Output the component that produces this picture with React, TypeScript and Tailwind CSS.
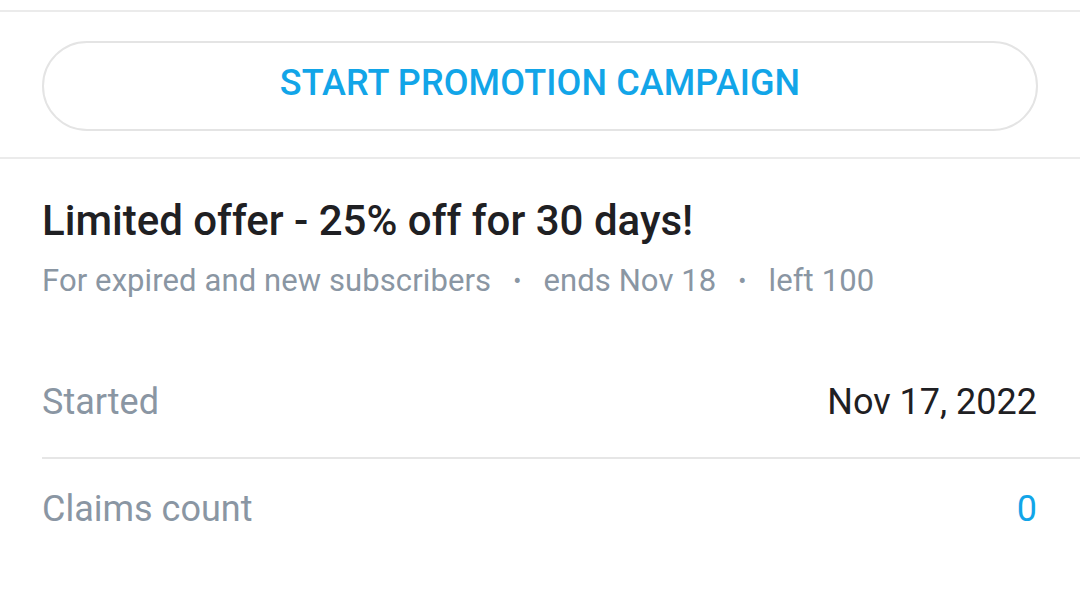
export default function App() {
  const font = { fontFamily: "Roboto, 'Noto Sans', sans-serif" };
  return (
    <div className="w-[1080px] h-[603px] bg-white overflow-hidden" style={font}>
      <div className="h-[10px] bg-white" />
      <div className="border-t-2 border-[#ebebeb] px-[42px] pt-[29px] pb-[26px]">
        <button
          type="button"
          className="w-[996px] h-[90px] rounded-full border-2 border-[#e4e4e4] bg-white flex items-center justify-center pb-[6px] text-[36px] font-medium text-[#12a5e8] tracking-[0.1px]"
        >
          START PROMOTION CAMPAIGN
        </button>
      </div>
      <div className="border-t-2 border-[#ebebeb] pt-[40px]">
        <div className="px-[42px]">
          <h2 className="text-[42px] font-medium text-[#1f2023] leading-[44px]">
            Limited offer - 25% off for 30 days!
          </h2>
          <div className="mt-[19px] flex items-center text-[31px] text-[#8a96a3] leading-[38px] tracking-[0.1px]">
            <span>For expired and new subscribers</span>
            <span className="mx-[22px] text-[24px]">•</span>
            <span>ends Nov 18</span>
            <span className="mx-[22px] text-[24px]">•</span>
            <span>left 100</span>
          </div>
        </div>
        <div className="mt-[51px] pl-[42px]">
          <div className="flex items-center justify-between pr-[43px] h-[108px] border-b-2 border-[#e6e6e6] pb-[4px]">
            <span className="text-[36px] text-[#8a96a3]">Started</span>
            <span className="text-[36px] text-[#1f2023]">Nov 17, 2022</span>
          </div>
          <div className="flex items-center justify-between pr-[43px] h-[100px]">
            <span className="text-[36px] text-[#8a96a3]">Claims count</span>
            <span className="text-[36px] text-[#12a5e8]">0</span>
          </div>
        </div>
      </div>
    </div>
  );
}
